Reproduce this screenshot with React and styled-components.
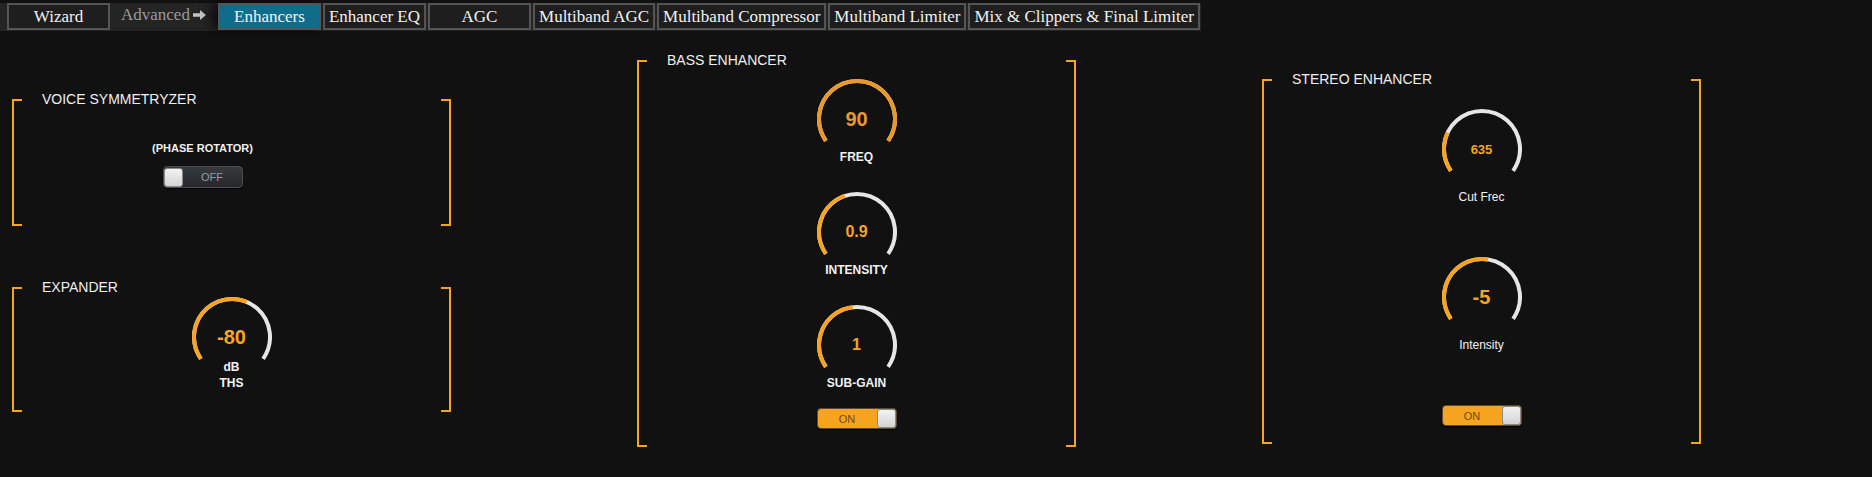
import styled, { createGlobalStyle } from 'styled-components';

const GlobalStyle = createGlobalStyle`
  html, body {
    margin: 0;
    padding: 0;
    background: #111111;
  }
  body {
    font-family: "Liberation Sans", Arial, sans-serif;
    color: #eeeeee;
  }
`;

const ORANGE = '#f7a521';

const StyledTopBar = styled.nav`
  margin-top: 3px;
  display: flex;
  width: fit-content;
  gap: 2px;
  padding: 0 1px 1px 7px;
  background: #242424;
`;

const StyledTab = styled.div`
  box-sizing: border-box;
  min-width: 103px;
  height: 27px;
  padding: 0 4px;
  border: 2px solid #555555;
  background: ${(p) => (p.$active ? '#0f6d8b' : '#1e1e1e')};
  box-shadow: ${(p) => (p.$active ? '-6px 0 12px rgba(0, 0, 0, 0.7)' : 'none')};
  color: #f2f2f2;
  font-family: "Liberation Serif", "Times New Roman", serif;
  font-size: 17px;
  line-height: 23px;
  text-align: center;
  white-space: nowrap;
`;

const StyledAdvanced = styled.div`
  display: flex;
  align-items: center;
  gap: 3px;
  margin: 0 10px 0 9px;
  padding-bottom: 4px;
  color: #9a9a9a;
  font-family: "Liberation Serif", "Times New Roman", serif;
  font-size: 17px;
`;

const StyledMain = styled.main`
  display: grid;
  grid-template-columns: repeat(3, 439px);
  column-gap: 186px;
  align-items: start;
  padding-left: 12px;
`;

const StyledColumn = styled.div`
  display: flex;
  flex-direction: column;
  gap: 61px;
  margin-top: ${(p) => p.$offset}px;
`;

const StyledPanel = styled.section`
  display: flex;
`;

const StyledBracket = styled.div`
  flex: none;
  width: 10px;
  box-sizing: border-box;
  border: 2px solid ${ORANGE};
  border-${(p) => (p.$side === 'left' ? 'right' : 'left')}: none;
`;

const StyledBody = styled.div`
  flex: 1;
  display: flex;
  flex-direction: column;
  align-items: center;
  padding: 0 ${(p) => p.$shift || 0}px ${(p) => p.$bottom}px 0;
`;

const StyledTitle = styled.h3`
  align-self: flex-start;
  margin: -8px 0 0 20px;
  font-size: 14px;
  font-weight: normal;
  line-height: 16px;
  color: #eeeeee;
`;

const StyledCaption = styled.div`
  margin-top: 34px;
  font-size: 11px;
  font-weight: bold;
  line-height: 14px;
  color: #f0f0f0;
`;

const StyledKnob = styled.div`
  display: flex;
  flex-direction: column;
  align-items: center;
  margin-top: ${(p) => p.$top}px;
`;

const StyledDial = styled.div`
  position: relative;
  width: 80px;
  height: 66px;
`;

const StyledValue = styled.div`
  position: absolute;
  top: 0;
  left: 0;
  width: 80px;
  height: 80px;
  display: flex;
  align-items: center;
  justify-content: center;
  font-weight: bold;
  font-size: ${(p) => p.$size}px;
  color: ${(p) => p.$color};
`;

const StyledKnobLabel = styled.div`
  margin-top: ${(p) => p.$gap}px;
  font-size: 12px;
  font-weight: ${(p) => (p.$bold ? 'bold' : 'normal')};
  line-height: 16px;
  text-align: center;
  color: #f2f2f2;
`;

const StyledSwitch = styled.div`
  box-sizing: border-box;
  width: 80px;
  height: ${(p) => (p.$on ? 21 : 22)}px;
  margin-top: ${(p) => p.$top}px;
  display: flex;
  flex-direction: ${(p) => (p.$on ? 'row-reverse' : 'row')};
  align-items: center;
  border: 1px solid ${(p) => (p.$on ? '#5a4a30' : '#4a4c50')};
  border-radius: 4px;
  background: ${(p) => (p.$on ? ORANGE : 'linear-gradient(#373a3e, #25272b)')};
  box-shadow: 0 1px 1px rgba(0, 0, 0, 0.8);
`;

const StyledThumb = styled.div`
  flex: none;
  box-sizing: border-box;
  width: 19px;
  height: 19px;
  border: 1px solid #8a8a8a;
  border-radius: 3px;
  background: linear-gradient(#f2f2f2, #d4d4d4);
`;

const StyledSwitchText = styled.span`
  flex: 1;
  text-align: center;
  font-size: 11px;
  color: ${(p) => (p.$on ? '#6e4a12' : '#9a9a9a')};
`;

const polar = (a, r) => {
  const rad = (a * Math.PI) / 180;
  return [40 + r * Math.sin(rad), 40 - r * Math.cos(rad)];
};

const arcPath = (a0, a1, r = 38) => {
  const [x0, y0] = polar(a0, r);
  const [x1, y1] = polar(a1, r);
  const large = a1 - a0 > 180 ? 1 : 0;
  return `M${x0} ${y0} A${r} ${r} 0 ${large} 1 ${x1} ${y1}`;
};

const Arrow = () => (
  <svg width="13" height="10" viewBox="0 0 13 10">
    <path d="M0 3.3h7V0l6 5-6 5V6.7H0z" fill="#c4c4c4" />
  </svg>
);

const Knob = ({ value, frac, size = 20, color = ORANGE, labels, bold, top = 0, gap }) => (
  <StyledKnob $top={top}>
    <StyledDial>
      <svg width="80" height="66" viewBox="0 0 80 66">
        <path d={arcPath(-125, 125)} fill="none" stroke="#e6e6e6" strokeWidth="4" />
        <path d={arcPath(-125, -125 + 250 * frac)} fill="none" stroke={color} strokeWidth="4" />
      </svg>
      <StyledValue $size={size} $color={color}>{value}</StyledValue>
    </StyledDial>
    <StyledKnobLabel $gap={gap} $bold={bold}>
      {labels.map((l) => (
        <div key={l}>{l}</div>
      ))}
    </StyledKnobLabel>
  </StyledKnob>
);

const Switch = ({ on, top }) => (
  <StyledSwitch $on={on} $top={top}>
    <StyledThumb />
    <StyledSwitchText $on={on}>{on ? 'ON' : 'OFF'}</StyledSwitchText>
  </StyledSwitch>
);

const Panel = ({ title, bottom, shift, children }) => (
  <StyledPanel>
    <StyledBracket $side="left" />
    <StyledBody $bottom={bottom} $shift={shift}>
      <StyledTitle>{title}</StyledTitle>
      {children}
    </StyledBody>
    <StyledBracket $side="right" />
  </StyledPanel>
);

const tabs = [
  'Enhancers',
  'Enhancer EQ',
  'AGC',
  'Multiband AGC',
  'Multiband Compressor',
  'Multiband Limiter',
  'Mix & Clippers & Final Limiter',
];

const App = () => (
  <>
    <GlobalStyle />
    <StyledTopBar>
      <StyledTab>Wizard</StyledTab>
      <StyledAdvanced>
        Advanced <Arrow />
      </StyledAdvanced>
      {tabs.map((t) => (
        <StyledTab key={t} $active={t === 'Enhancers'}>
          {t}
        </StyledTab>
      ))}
    </StyledTopBar>

    <StyledMain>
      <StyledColumn $offset={68}>
        <Panel title="VOICE SYMMETRYZER" bottom={38} shift={58}>
          <StyledCaption>(PHASE ROTATOR)</StyledCaption>
          <Switch on={false} top={11} />
        </Panel>
        <Panel title="EXPANDER" bottom={21}>
          <Knob value="-80" frac={0.592} labels={['dB', 'THS']} bold top={2} gap={-4} />
        </Panel>
      </StyledColumn>

      <StyledColumn $offset={29}>
        <Panel title="BASS ENHANCER" bottom={18}>
          <Knob value="90" frac={1} color="#e8992a" labels={['FREQ']} bold top={11} gap={4} />
          <Knob value="0.9" frac={0.426} size={16} labels={['INTENSITY']} bold top={27} gap={4} />
          <Knob value="1" frac={0.475} size={16} labels={['SUB-GAIN']} bold top={27} gap={4} />
          <Switch on top={17} />
        </Panel>
      </StyledColumn>

      <StyledColumn $offset={48}>
        <Panel title="STEREO ENHANCER" bottom={18}>
          <Knob value="635" frac={0.242} size={13} labels={['Cut Frec']} top={22} gap={14} />
          <Knob value="-5" frac={0.536} labels={['Intensity']} top={52} gap={14} />
          <Switch on top={52} />
        </Panel>
      </StyledColumn>
    </StyledMain>
  </>
);

export default App;
